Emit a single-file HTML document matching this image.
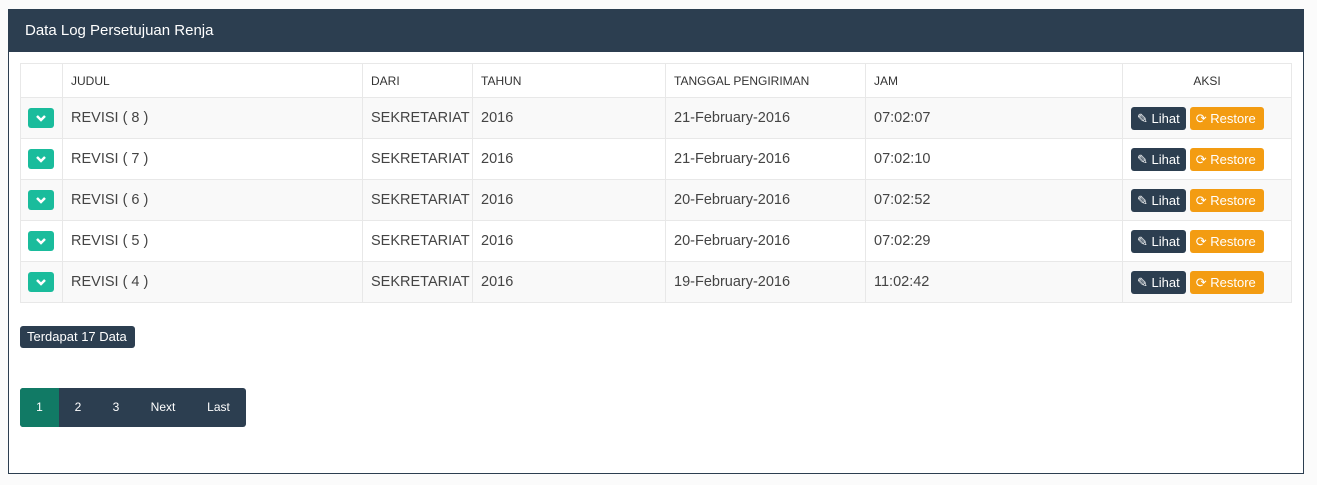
<!DOCTYPE html>
<html><head><meta charset="utf-8"><style>
body{margin:0;width:1317px;height:485px;background:#fbfbfb;font-family:"Liberation Sans",sans-serif;position:relative;overflow:hidden}
.panel{position:absolute;left:8px;top:9px;width:1294px;height:463px;border:1px solid #2c3e50;background:#fff}
.hd{height:42px;background:#2c3e50;color:#fff;font-size:15px;line-height:42px;padding-left:16px}
table{position:absolute;left:11px;top:53px;border-collapse:collapse;width:1271px;table-layout:fixed;font-size:14.5px;color:#444}
td,th{border:1px solid #e8e8e8;padding:0 8px;text-align:left;font-weight:normal;white-space:nowrap;overflow:hidden}
th{height:33px;font-size:12px;color:#333}
td{height:40px}
tr.s td{background:#f9f9f9}
.chev{display:inline-block;width:26px;height:20px;background:#1abc9c;border-radius:3px;position:relative;top:2px;margin-left:-1px}
.btn{display:inline-block;color:#fff;font-size:13px;height:23px;line-height:23px;border-radius:3px;padding:0 6px;vertical-align:middle}
.l{background:#2c3e50}.r{background:#f39c12;padding:0 8px 0 6px}
.badge{position:absolute;left:11px;top:316px;background:#2c3e50;color:#fff;font-size:13px;height:22px;line-height:22px;padding:0 8px 0 7px;border-radius:3px}
.pg{position:absolute;left:11px;top:378px;height:39px;width:226px;background:#2c3e50;border-radius:3px;overflow:hidden;color:#fff;font-size:12px;display:flex}
.pg span{line-height:39px;text-align:center}
</style></head><body>
<div class="panel">
<div class="hd">Data Log Persetujuan Renja</div>
<table>
<colgroup><col style="width:42px"><col style="width:300px"><col style="width:110px"><col style="width:193px"><col style="width:200px"><col style="width:257px"><col style="width:169px"></colgroup>
<tr><th></th><th>JUDUL</th><th>DARI</th><th>TAHUN</th><th>TANGGAL PENGIRIMAN</th><th>JAM</th><th style="text-align:center">AKSI</th></tr>
<tr class="s"><td><span class="chev"><svg width="26" height="20"><path d="M9 8l4 4 4-4" stroke="#fff" stroke-width="2.5" fill="none"/></svg></span></td><td>REVISI ( 8 )</td><td>SEKRETARIAT</td><td>2016</td><td>21-February-2016</td><td>07:02:07</td><td><span class="btn l">&#9998; Lihat</span> <span class="btn r">&#10227; Restore</span></td></tr>
<tr><td><span class="chev"><svg width="26" height="20"><path d="M9 8l4 4 4-4" stroke="#fff" stroke-width="2.5" fill="none"/></svg></span></td><td>REVISI ( 7 )</td><td>SEKRETARIAT</td><td>2016</td><td>21-February-2016</td><td>07:02:10</td><td><span class="btn l">&#9998; Lihat</span> <span class="btn r">&#10227; Restore</span></td></tr>
<tr class="s"><td><span class="chev"><svg width="26" height="20"><path d="M9 8l4 4 4-4" stroke="#fff" stroke-width="2.5" fill="none"/></svg></span></td><td>REVISI ( 6 )</td><td>SEKRETARIAT</td><td>2016</td><td>20-February-2016</td><td>07:02:52</td><td><span class="btn l">&#9998; Lihat</span> <span class="btn r">&#10227; Restore</span></td></tr>
<tr><td><span class="chev"><svg width="26" height="20"><path d="M9 8l4 4 4-4" stroke="#fff" stroke-width="2.5" fill="none"/></svg></span></td><td>REVISI ( 5 )</td><td>SEKRETARIAT</td><td>2016</td><td>20-February-2016</td><td>07:02:29</td><td><span class="btn l">&#9998; Lihat</span> <span class="btn r">&#10227; Restore</span></td></tr>
<tr class="s"><td><span class="chev"><svg width="26" height="20"><path d="M9 8l4 4 4-4" stroke="#fff" stroke-width="2.5" fill="none"/></svg></span></td><td>REVISI ( 4 )</td><td>SEKRETARIAT</td><td>2016</td><td>19-February-2016</td><td>11:02:42</td><td><span class="btn l">&#9998; Lihat</span> <span class="btn r">&#10227; Restore</span></td></tr>
</table>
<div class="badge">Terdapat 17 Data</div>
<div class="pg"><span style="width:39px;background:#117a65">1</span><span style="width:38px">2</span><span style="width:38px">3</span><span style="width:56px">Next</span><span style="width:55px">Last</span></div>
</div>
</body></html>
